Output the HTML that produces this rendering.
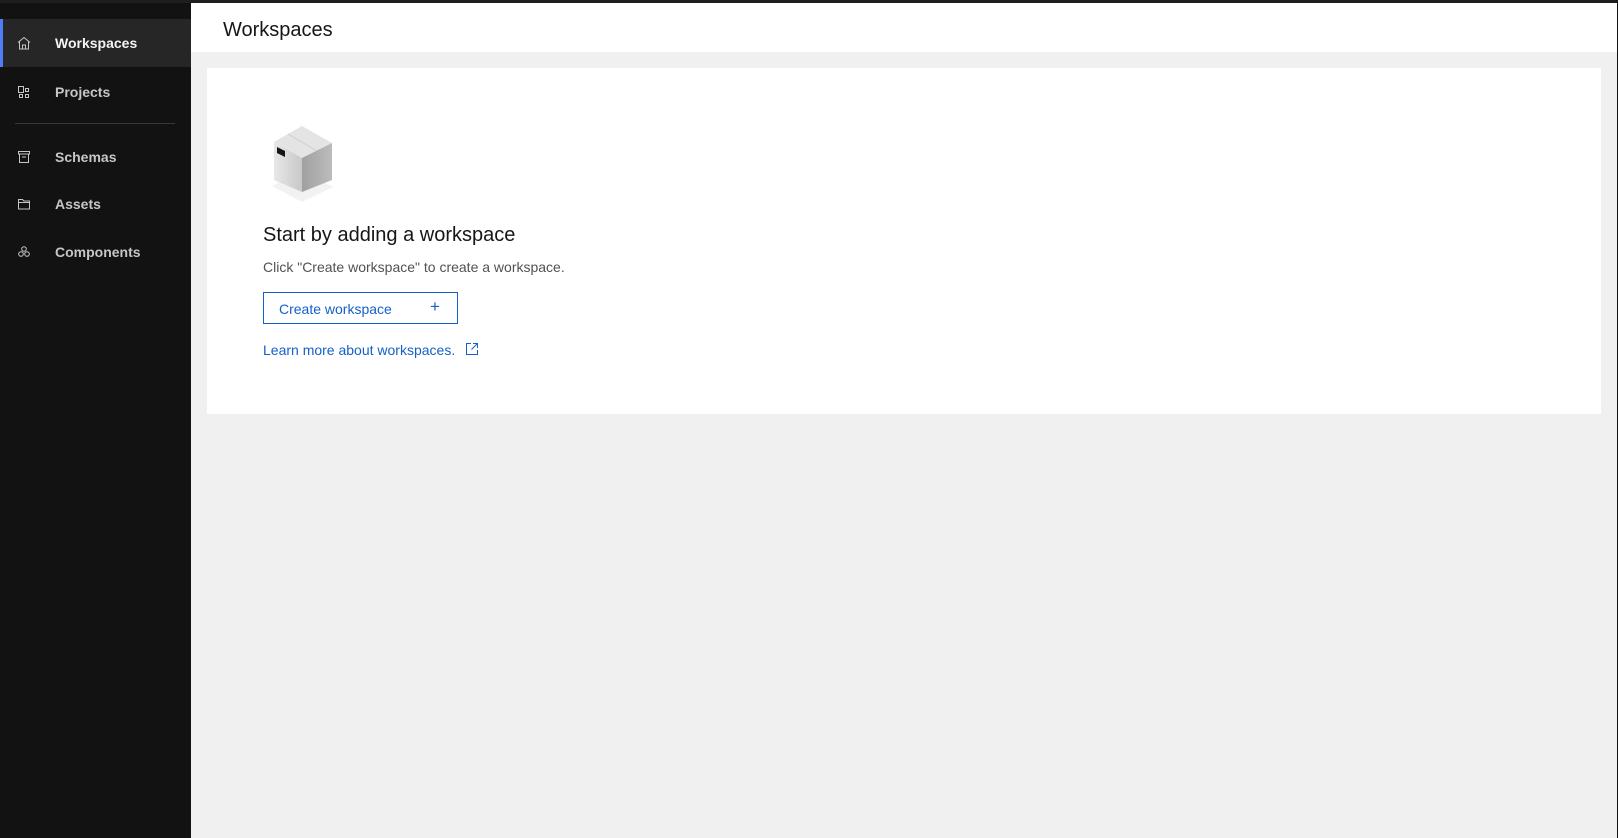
<!DOCTYPE html>
<html><head><meta charset="utf-8"><style>
*{box-sizing:border-box;margin:0;padding:0}
body{width:1618px;height:838px;background:#161616;font-family:"Liberation Sans",sans-serif;position:relative;overflow:hidden}
.top{position:absolute;left:0;top:0;width:1618px;height:3px;background:#1e1e1e}
.side{position:absolute;left:0;top:3px;width:191px;height:835px;background:#121212}
.item{position:absolute;left:0;width:191px;height:48px;color:#c6c6c6;font-size:14px;font-weight:bold}
.item span{position:absolute;left:55px;top:16px}
.item svg{position:absolute;left:16px;top:16px}
.active{background:#262626;color:#f4f4f4;border-left:3px solid #4d7ef7}
.div{position:absolute;left:15px;top:120px;width:160px;height:1px;background:#393939}
.main{position:absolute;left:191px;top:3px;width:1426px;height:835px;background:#f0f0f0}
.hdr{position:absolute;left:0;top:0;width:1426px;height:49px;background:#fff;font-size:20px;color:#161616}
.hdr span{position:absolute;left:32px;top:16px}
.card{position:absolute;left:16px;top:65px;width:1394px;height:346px;background:#fff}
h2{position:absolute;left:56px;top:156px;font-size:20px;font-weight:normal;color:#161616}
.p{position:absolute;left:56px;top:191px;font-size:14px;color:#525252}
.btn{position:absolute;left:56px;top:224px;width:195px;height:32px;border:1px solid #1560c9;color:#1560c9;font-size:14px}
.btn span{position:absolute;left:15px;top:8px}
.btn b{position:absolute;left:166px;top:4px;font-weight:normal;font-size:17px}
.lnk{position:absolute;left:56px;top:274px;font-size:14px;color:#1560c9}
</style></head><body>
<div class="top"></div>
<div class="side">
<div class="item active" style="top:16px"><svg width="16" height="16" viewBox="0 0 16 16" fill="none" stroke="#c6c6c6" style="left:13px"><path d="M2 7.5L8 2.5l6 5M3.5 6.5V14h9V6.5M6.5 14V10h3v4"/></svg><span style="left:52px">Workspaces</span></div>
<div class="item" style="top:65px"><svg width="16" height="16" viewBox="0 0 16 16" fill="none" stroke="#c6c6c6"><rect x="2.5" y="2.5" width="5" height="6"/><rect x="9.5" y="4.5" width="3" height="3"/><rect x="3.5" y="10.5" width="3" height="3"/><rect x="9.5" y="10.5" width="3" height="3"/></svg><span>Projects</span></div>
<div class="div"></div>
<div class="item" style="top:130px"><svg width="16" height="16" viewBox="0 0 16 16" fill="none" stroke="#c6c6c6"><rect x="2.5" y="2.5" width="11" height="2.5"/><path d="M3.5 5v8.5h9V5M6 8h4"/></svg><span>Schemas</span></div>
<div class="item" style="top:177px"><svg width="16" height="16" viewBox="0 0 16 16" fill="none" stroke="#c6c6c6"><path d="M2.5 3.5h4l1.5 1.5h5.5v8h-11zM2.5 6.5h11"/></svg><span>Assets</span></div>
<div class="item" style="top:225px"><svg width="16" height="16" viewBox="0 0 16 16" fill="none" stroke="#c6c6c6"><circle cx="8" cy="5" r="2.3"/><circle cx="5" cy="10" r="2.3"/><circle cx="11" cy="10" r="2.3"/></svg><span>Components</span></div>
</div>
<div class="main">
<div class="hdr"><span>Workspaces</span></div>
<div class="card">
<svg style="position:absolute;left:65px;top:58px" width="62" height="78" viewBox="0 0 62 78">
<polygon points="0,60 30,45 61,61 30,76" fill="#f2f2f2"/>
<polygon points="2,16 30,0 60,17 30,32" fill="#e4e4e4"/>
<line x1="16" y1="8" x2="45" y2="25" stroke="#c4c4c4" stroke-width=".6"/>
<defs><linearGradient id="g1" x1="0" x2="1"><stop offset="0" stop-color="#e8e8e8"/><stop offset="1" stop-color="#c8c8c8"/></linearGradient><linearGradient id="g2" x1="0" x2="1"><stop offset="0" stop-color="#a0a0a0"/><stop offset="1" stop-color="#bcbcbc"/></linearGradient></defs>
<polygon points="2,16 30,32 30,66 2,54" fill="url(#g1)"/>
<polygon points="30,32 60,17 60,54 30,66" fill="url(#g2)"/>
<polygon points="5,21 13,25 13,31 5,27" fill="#161616"/>
</svg>
<h2>Start by adding a workspace</h2>
<div class="p">Click "Create workspace" to create a workspace.</div>
<div class="btn"><span>Create workspace</span><b>+</b></div>
<div class="lnk">Learn more about workspaces. <svg style="vertical-align:-1px;margin-left:6px" width="14" height="14" viewBox="0 0 14 14" fill="none" stroke="#1560c9"><path d="M6 1.5H1.5v11h11V8M8 1.5h4.5V6M12.5 1.5L6.5 7.5"/></svg></div>
</div>
</div>
<div style="position:absolute;right:0;top:0;width:1px;height:838px;background:#111"></div>
</body></html>
